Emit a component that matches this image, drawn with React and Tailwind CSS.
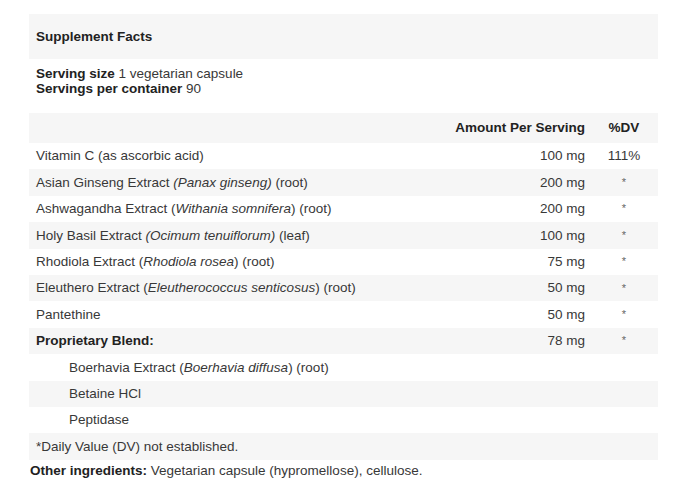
import React from 'react';

const rows = [
  { name: <>Vitamin C (as ascorbic acid)</>, amount: '100 mg', dv: '111%' },
  { name: <>Asian Ginseng Extract <i>(Panax ginseng)</i> (root)</>, amount: '200 mg', dv: '*' },
  { name: <>Ashwagandha Extract (<i>Withania somnifera</i>) (root)</>, amount: '200 mg', dv: '*' },
  { name: <>Holy Basil Extract <i>(Ocimum tenuiflorum)</i> (leaf)</>, amount: '100 mg', dv: '*' },
  { name: <>Rhodiola Extract (<i>Rhodiola rosea</i>) (root)</>, amount: '75 mg', dv: '*' },
  { name: <>Eleuthero Extract (<i>Eleutherococcus senticosus</i>) (root)</>, amount: '50 mg', dv: '*' },
  { name: <>Pantethine</>, amount: '50 mg', dv: '*' },
  { name: <span className="font-bold text-[#222]">Proprietary Blend:</span>, amount: '78 mg', dv: '*' },
  { name: <>Boerhavia Extract (<i>Boerhavia diffusa</i>) (root)</>, indent: true },
  { name: <>Betaine HCl</>, indent: true },
  { name: <>Peptidase</>, indent: true },
  { name: <>*Daily Value (DV) not established.</> },
];

const Row = ({ row, striped }) => (
  <div className={`flex h-[26.4px] items-center ${striped ? 'bg-[#f6f6f6]' : 'bg-white'}`}>
    <div className={`flex-1 ${row.indent ? 'pl-[40px]' : 'pl-[7px]'}`}>{row.name}</div>
    <div className="w-[130px] text-right">{row.amount}</div>
    <div className={`ml-[15px] w-[48px] text-center ${row.dv === '*' ? 'text-[11px] text-[#666]' : ''}`}>
      {row.dv}
    </div>
    <div className="w-[10px]" />
  </div>
);

export default function App() {
  return (
    <div className="min-h-[500px] bg-white pt-[14px] font-['Liberation_Sans',Arial,sans-serif] text-[13.5px] leading-none text-[#383838]">
      <div className="ml-[29px] w-[629px]">
        <div className="flex h-[45px] items-center bg-[#f6f6f6] pl-[7px] font-bold text-[#222]">
          Supplement Facts
        </div>
        <div className="h-[54px] bg-white pl-[7px] pt-[7px] leading-[15px]">
          <div>
            <b className="text-[#222]">Serving size</b> 1 vegetarian capsule
          </div>
          <div>
            <b className="text-[#222]">Servings per container</b> 90
          </div>
        </div>
        <div className="flex h-[30px] items-center bg-[#f6f6f6] font-bold text-[#222]">
          <div className="flex-1" />
          <div className="w-[130px] text-right">Amount Per Serving</div>
          <div className="ml-[15px] w-[48px] text-center">%DV</div>
          <div className="w-[10px]" />
        </div>
        {rows.map((row, i) => (
          <Row key={i} row={row} striped={i % 2 === 1} />
        ))}
      </div>
      <div className="ml-[30px] mt-[2px] leading-[18px]">
        <b className="text-[#222]">Other ingredients:</b> Vegetarian capsule (hypromellose), cellulose.
      </div>
    </div>
  );
}
